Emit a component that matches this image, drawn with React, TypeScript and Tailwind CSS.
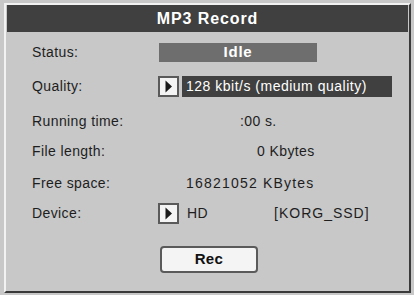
import React from "react";

const font = { fontFamily: '"Liberation Sans", Arial, sans-serif' };

function ArrowButton() {
  return (
    <div className="w-[21px] h-[21px] bg-[#f4f4f4] border-2 border-[#5a5a5a] flex items-center justify-center shrink-0">
      <svg width="9" height="13" viewBox="0 0 9 13">
        <path d="M1.5 0.5 L8 6.5 L1.5 12.5 Z" fill="#1a1a1a" />
      </svg>
    </div>
  );
}

function Row({
  label,
  className,
  children,
}: {
  label: string;
  className?: string;
  children?: React.ReactNode;
}) {
  return (
    <div className={`flex items-center ${className ?? ""}`}>
      <div className="w-[152px] shrink-0 pl-[26px] text-[14px] tracking-[0.4px] text-[#1e1e1e]">
        {label}
      </div>
      <div className="flex-1 flex items-center h-full">{children}</div>
    </div>
  );
}

export default function App() {
  return (
    <div
      className="w-[414px] h-[295px] bg-[#c8c8c8] pt-[3px] pl-[4px] overflow-hidden"
      style={font}
    >
      <div className="w-[407px] h-[290px] border-t-2 border-l-2 border-[#f2f2f2] border-r-2 border-r-[#3a3a3a] border-b-2 border-b-[#3a3a3a] bg-[#c8c8c8] flex flex-col">
        <div className="mx-[1px] h-[27px] bg-[#404040] flex items-center justify-center text-white font-bold text-[16px] tracking-[0.9px]">
          MP3 Record
        </div>

        <Row label="Status:" className="mt-[11px] h-[19px]">
          <div className="ml-[1px] w-[158px] h-[19px] bg-[#6e6e6e] text-white font-bold text-[15px] tracking-[0.8px] flex items-center justify-center">
            Idle
          </div>
        </Row>

        <Row label="Quality:" className="mt-[14px] h-[21px]">
          <ArrowButton />
          <div className="ml-[3px] w-[210px] h-[21px] bg-[#404040] text-white text-[14px] tracking-[0.5px] flex items-center pl-[4px] whitespace-nowrap">
            128 kbit/s (medium quality)
          </div>
        </Row>

        <Row label="Running time:" className="mt-[14px] h-[20px]">
          <div className="pl-[82px] text-[14px] tracking-[0.4px] text-[#1e1e1e]">:00 s.</div>
        </Row>

        <Row label="File length:" className="mt-[10px] h-[20px]">
          <div className="pl-[99px] text-[14px] tracking-[0.4px] text-[#1e1e1e]">0 Kbytes</div>
        </Row>

        <Row label="Free space:" className="mt-[12px] h-[20px]">
          <div className="pl-[28px] text-[14px] tracking-[1.2px] text-[#1e1e1e]">16821052 KBytes</div>
        </Row>

        <Row label="Device:" className="mt-[10px] h-[21px]">
          <ArrowButton />
          <div className="pl-[8px] text-[14px] tracking-[0.4px] text-[#1e1e1e]">HD</div>
          <div className="pl-[66px] text-[14px] tracking-[1px] text-[#1e1e1e]">[KORG_SSD]</div>
        </Row>

        <div className="mt-[22px] flex pl-[154px]">
          <div className="w-[98px] h-[27px] bg-[#f4f4f4] border-2 border-[#5a5a5a] rounded-[4px] flex items-center justify-center font-bold text-[15px] tracking-[0.4px] text-[#111]">
            Rec
          </div>
        </div>
      </div>
    </div>
  );
}
